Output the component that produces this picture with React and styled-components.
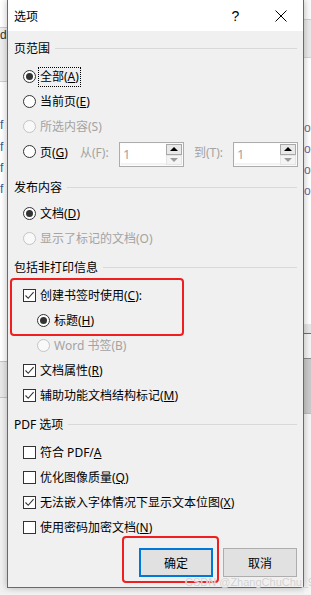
import React from 'react';
import styled, { createGlobalStyle } from 'styled-components';

const GlobalStyle = createGlobalStyle`
  html, body {
    margin: 0;
    padding: 0;
    background: #f3f3f3;
  }
  * {
    box-sizing: border-box;
  }
`;

const Page = styled.div`
  position: relative;
  display: flex;
  width: 311px;
  height: 595px;
  overflow: hidden;
  background: #f3f3f3;
  font-family: "Noto Sans", "Noto Sans CJK SC", sans-serif;
  font-size: 12px;
`;

/* the window behind the dialog, seen only at the two edges */
const Strip = styled.div`
  flex: none;
  width: ${({ $w }) => $w}px;
  display: flex;
  flex-direction: column;
`;

const Band = styled.div`
  flex: none;
  height: ${({ $h }) => $h}px;
  background: ${({ $bg }) => $bg};
  border-bottom: ${({ $line }) => ($line ? `1px solid ${$line}` : 'none')};
  overflow: hidden;
  white-space: nowrap;
  font-family: "Liberation Sans", sans-serif;
  font-size: 12px;
  line-height: 14px;
  color: ${({ $color }) => $color || '#333'};
  padding-left: ${({ $pad }) => $pad || 0}px;
`;

const Dialog = styled.div`
  position: relative;
  flex: none;
  width: 297px;
  height: 588px;
  display: flex;
  flex-direction: column;
  background: #f0f0f0;
  border: 1px solid #6a6a6a;
  border-top: none;
  box-shadow: 0 0 7px rgba(0, 0, 0, 0.28);
`;

const TitleBar = styled.div`
  flex: none;
  height: 31px;
  display: flex;
  align-items: center;
  background: #ffffff;
  padding-left: 6px;
`;

const Title = styled.div`
  flex: 1;
  color: #000;
  font-size: 12px;
`;

const TitleButton = styled.div`
  width: 45px;
  height: 31px;
  display: flex;
  align-items: center;
  justify-content: center;
  color: #000;
  font-family: "Liberation Sans", sans-serif;
  font-size: 14px;
`;

const Body = styled.div`
  flex: 1;
  display: flex;
  flex-direction: column;
  padding: 7px 6px 0 6px;
  color: #000;
`;

const GroupHeader = styled.div`
  display: flex;
  align-items: center;
  height: 20px;
  gap: 5px;
  margin-top: ${({ $top }) => $top || 0}px;
  margin-bottom: ${({ $bottom }) => $bottom ?? 6}px;
  white-space: nowrap;

  &::after {
    content: '';
    flex: 1;
    height: 1px;
    background: #d9d9d9;
    margin-top: 1px;
  }
`;

const Row = styled.div`
  display: flex;
  align-items: center;
  height: 25px;
  gap: 4px;
  padding-left: ${({ $indent }) => $indent}px;
  color: ${({ $disabled }) => ($disabled ? '#a3a3a3' : '#000')};
  white-space: nowrap;
`;

const RadioDot = styled.span`
  flex: none;
  width: 13px;
  height: 13px;
  border-radius: 50%;
  border: 1px solid ${({ $disabled }) => ($disabled ? '#c4c4c4' : '#333')};
  background: ${({ $disabled }) => ($disabled ? '#f9f9f9' : '#fff')};
  display: flex;
  align-items: center;
  justify-content: center;

  &::after {
    content: '';
    display: ${({ $checked }) => ($checked ? 'block' : 'none')};
    width: 7px;
    height: 7px;
    border-radius: 50%;
    background: #333;
  }
`;

const Box = styled.span`
  flex: none;
  width: 13px;
  height: 13px;
  border: 1px solid #333;
  background: #fff;
  display: flex;
  align-items: center;
  justify-content: center;
`;

const Label = styled.span`
  padding: 1px 1px;
  border: 1px dotted ${({ $focus }) => ($focus ? '#000' : 'transparent')};
  margin-left: -2px;
  line-height: 16px;
`;

const FieldLabel = styled.span`
  flex: none;
  width: ${({ $w }) => $w}px;
  margin-left: ${({ $left }) => $left || 0}px;
  color: ${({ $disabled }) => ($disabled ? '#a3a3a3' : '#000')};
`;

const Spin = styled.div`
  flex: none;
  align-self: flex-start;
  margin-top: 3px;
  width: 65px;
  height: 25px;
  display: flex;
  border: 1px solid #acacac;
  background: #fbfbfb;
  padding: 1px;
`;

const SpinValue = styled.div`
  flex: 1;
  background: #fff;
  color: #a3a3a3;
  font-size: 13px;
  line-height: 20px;
  padding-left: 2px;
  border-bottom: 2px solid #f3f3f3;
`;

const SpinButtons = styled.div`
  flex: none;
  width: 16px;
  display: flex;
  flex-direction: column;
`;

const SpinButton = styled.div`
  flex: 1;
  display: flex;
  align-items: center;
  justify-content: center;
  background: ${({ $up }) => ($up ? '#e9e9e9' : '#f4f4f4')};
  border: 1px solid ${({ $up }) => ($up ? '#a8a8a8' : '#e4e4e4')};
`;

const Arrow = styled.span`
  width: 0;
  height: 0;
  border-left: 4px solid transparent;
  border-right: 4px solid transparent;
  ${({ $up, $color }) =>
    $up
      ? `border-bottom: 4px solid ${$color};`
      : `border-top: 4px solid ${$color};`}
`;

const ButtonRow = styled.div`
  display: flex;
  justify-content: flex-end;
  gap: 10px;
  margin-top: 8px;
`;

const Button = styled.div`
  width: 74px;
  height: 29px;
  display: flex;
  align-items: center;
  justify-content: center;
  background: #e1e1e1;
  border: ${({ $primary }) => ($primary ? '2px solid #0078d7' : '1px solid #adadad')};
  color: #000;
`;

/* red annotation marks drawn over the screenshot */
const Mark = styled.div`
  position: absolute;
  left: ${({ $x }) => $x}px;
  top: ${({ $y }) => $y}px;
  width: ${({ $w }) => $w}px;
  height: ${({ $h }) => $h}px;
  border: 2px solid #f01e1e;
  border-radius: 4px;
  pointer-events: none;
`;

const Watermark = styled.div`
  position: absolute;
  left: 185px;
  top: 576px;
  font-family: "Liberation Sans", sans-serif;
  font-size: 11px;
  color: #cfcfcf;
  text-shadow: 0 0 1px #fff;
  white-space: nowrap;
`;

const Check = () => (
  <svg width="11" height="11" viewBox="0 0 11 11">
    <path d="M1.5 5.5 L4.2 8.3 L9.6 2.2" fill="none" stroke="#333" strokeWidth="1.1" />
  </svg>
);

const Close = () => (
  <svg width="12" height="12" viewBox="0 0 12 12">
    <path d="M0.5 0.5 L11.5 11.5 M11.5 0.5 L0.5 11.5" stroke="#000" strokeWidth="1" />
  </svg>
);

const Radio = ({ checked, disabled, indent = 9, focus, children }) => (
  <Row $indent={indent} $disabled={disabled}>
    <RadioDot $checked={checked} $disabled={disabled} />
    <Label $focus={focus}>{children}</Label>
  </Row>
);

const CheckRow = ({ checked, children }) => (
  <Row $indent={9}>
    <Box>{checked && <Check />}</Box>
    <Label>{children}</Label>
  </Row>
);

const SpinBox = () => (
  <Spin>
    <SpinValue>1</SpinValue>
    <SpinButtons>
      <SpinButton $up>
        <Arrow $up $color="#000" />
      </SpinButton>
      <SpinButton>
        <Arrow $color="#9a9a9a" />
      </SpinButton>
    </SpinButtons>
  </Spin>
);

export default function App() {
  return (
    <Page>
      <GlobalStyle />
      <Strip $w={7}>
        <Band $h={28} $bg="#ffffff" $line="#cfcfcf" />
        <Band $h={54} $bg="#efefef" $line="#cfcfcf">d:</Band>
        <Band $h={36} $bg="#ffffff" />
        <Band $h={22} $bg="#ffffff" $color="#2f5f9e">f</Band>
        <Band $h={21} $bg="#ffffff" $color="#2f5f9e">f</Band>
        <Band $h={21} $bg="#ffffff" $color="#2f5f9e">f</Band>
        <Band $h={180} $bg="#ffffff" $color="#2f5f9e" $line="#c4c4c4">f</Band>
        <Band $h={36} $bg="#e8e8e8" $line="#c4c4c4" />
        <Band $h={196} $bg="#f1f1f1" />
      </Strip>
      <Dialog>
        <TitleBar>
          <Title>选项</Title>
          <TitleButton>?</TitleButton>
          <TitleButton>
            <Close />
          </TitleButton>
        </TitleBar>
        <Body>
          <GroupHeader>页范围</GroupHeader>
          <Radio checked focus>
            全部(<u>A</u>)
          </Radio>
          <Radio>
            当前页(<u>E</u>)
          </Radio>
          <Radio disabled>所选内容(S)</Radio>
          <Row $indent={9}>
            <RadioDot />
            <FieldLabel $w={36}>
              页(<u>G</u>)
            </FieldLabel>
            <FieldLabel $w={35} $disabled>
              从(F):
            </FieldLabel>
            <SpinBox />
            <FieldLabel $w={35} $left={6} $disabled>
              到(T):
            </FieldLabel>
            <SpinBox />
          </Row>

          <GroupHeader $top={13} $bottom={4}>
            发布内容
          </GroupHeader>
          <Radio checked>
            文档(<u>D</u>)
          </Radio>
          <Radio disabled>显示了标记的文档(O)</Radio>

          <GroupHeader $top={6}>包括非打印信息</GroupHeader>
          <CheckRow checked>
            创建书签时使用(<u>C</u>):
          </CheckRow>
          <Radio checked indent={23}>
            标题(<u>H</u>)
          </Radio>
          <Radio disabled indent={23}>
            Word 书签(B)
          </Radio>
          <CheckRow checked>
            文档属性(<u>R</u>)
          </CheckRow>
          <CheckRow checked>
            辅助功能文档结构标记(<u>M</u>)
          </CheckRow>

          <GroupHeader $top={6}>PDF 选项</GroupHeader>
          <CheckRow>
            符合 PDF/<u>A</u>
          </CheckRow>
          <CheckRow>
            优化图像质量(<u>Q</u>)
          </CheckRow>
          <CheckRow checked>
            无法嵌入字体情况下显示文本位图(<u>X</u>)
          </CheckRow>
          <CheckRow>
            使用密码加密文档(<u>N</u>)
          </CheckRow>

          <ButtonRow>
            <Button $primary>确定</Button>
            <Button>取消</Button>
          </ButtonRow>
        </Body>
        <Mark $x={2} $y={278} $w={174} $h={58} />
        <Mark $x={114} $y={536} $w={97} $h={47} />
      </Dialog>
      <Strip $w={7}>
        <Band $h={20} $bg="#fbfbfb" $line="#cfcfcf" />
        <Band $h={38} $bg="#eaeaea" $line="#d6d6d6" />
        <Band $h={63} $bg="#ffffff" />
        <Band $h={21} $bg="#ffffff" $color="#6b6b9e" $pad={0}>
          o
        </Band>
        <Band $h={21} $bg="#ffffff" $color="#6b6b9e">
          o
        </Band>
        <Band $h={21} $bg="#ffffff" $color="#6b6b9e">
          o
        </Band>
        <Band $h={140} $bg="#ffffff" $color="#6b6b9e">
          o
        </Band>
        <Band $h={10} $bg="#e6e6e6" $line="#6f6f6f" />
        <Band $h={25} $bg="#f4f4f4" $line="#8a8a8a" />
        <Band $h={55} $bg="#cbcbcb" $line="#bdbdbd" />
        <Band $h={180} $bg="#f6f6f6" />
      </Strip>
      <Watermark>CSDN @ZhangChuChu_9248</Watermark>
    </Page>
  );
}
